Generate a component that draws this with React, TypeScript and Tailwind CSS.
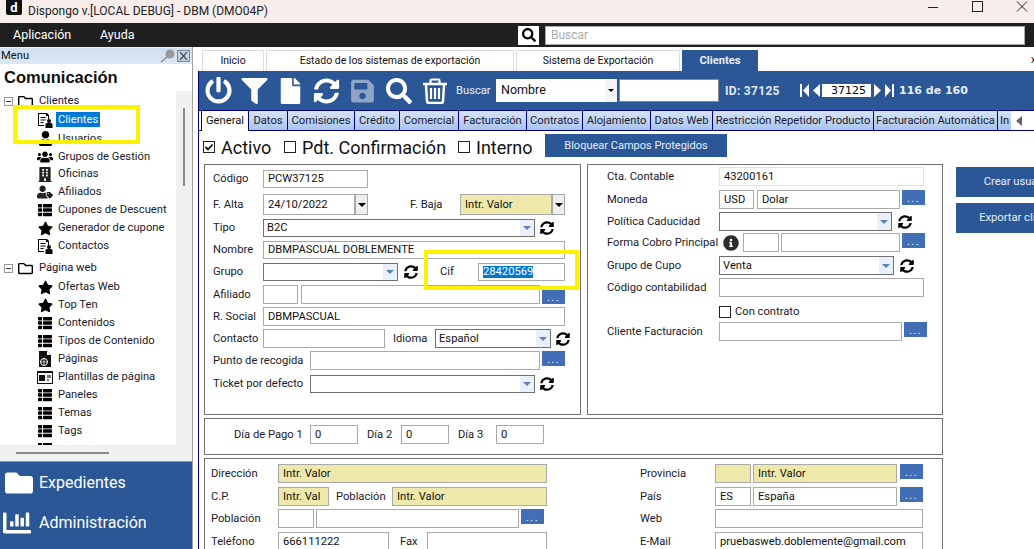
import type { ReactNode } from 'react'
import {
  FaBuilding, FaChartBar, FaFile, FaFilter, FaFolder, FaInfoCircle, FaPowerOff, FaRegFolder,
  FaSave, FaSearch, FaStar, FaSyncAlt, FaThList, FaUser, FaUsers, FaUserTag,
} from 'react-icons/fa'

function ContactIcon() {
  return (
    <svg width="16" height="16" viewBox="0 0 16 16" className="text-black">
      <path d="M1 1h9l2 2v4h-1V4H9V2H2v11h5v1H1z" fill="currentColor" />
      <path d="M3.5 5h5v1h-5zM3.5 7.5h5v1h-5zM3.5 10h3v1h-3z" fill="currentColor" />
      <circle cx="12" cy="9" r="2" fill="currentColor" />
      <path d="M8.5 16v-3.5q0-1.5 1.5-1.5h4q1.500 0 1.500 1.500V16z" fill="currentColor" />
    </svg>
  )
}

function PageIcon() {
  return (
    <svg width="16" height="16" viewBox="0 0 16 16">
      <path d="M2 0h8l4 4v12H2z" fill="#111" />
      <path d="M10 0v4h4z" fill="#fff" />
      <circle cx="7" cy="11" r="3.500" fill="none" stroke="#fff" strokeWidth="1" />
      <path d="M3.500 11h7M7 7.500v7" stroke="#fff" strokeWidth="0.7" />
    </svg>
  )
}

function TemplateIcon() {
  return (
    <svg width="16" height="13" viewBox="0 0 16 13">
      <rect x="0.500" y="0.500" width="15" height="12" fill="#fff" stroke="#111" />
      <rect x="0" y="0" width="16" height="2" fill="#111" />
      <rect x="2" y="4" width="6" height="6" fill="#111" />
      <rect x="10" y="4" width="4" height="3" fill="#777" />
      <rect x="10" y="8" width="2" height="2" fill="#777" />
    </svg>
  )
}

function TrashIcon() {
  return (
    <svg width="26" height="26" viewBox="0 0 26 26" className="ml-[10px] shrink-0">
      <path d="M1 6h24" stroke="#fff" strokeWidth="2.500" />
      <path d="M8.500 5.500V2.500q0-1 1-1h7q1 0 1 1v3" fill="none" stroke="#fff" strokeWidth="2.200" />
      <path d="M4 7l1 16q0 2 2 2h12q2 0 2-2l1-16" fill="none" stroke="#fff" strokeWidth="2.500" />
      <path d="M9 10v11M13 10v11M17 10v11" stroke="#fff" strokeWidth="2.200" />
    </svg>
  )
}

const list = <FaThList className="w-[16px] h-[14px] text-black" />
const star = <FaStar className="w-[15px] h-[15px] text-black" />

const firstGroup: { label: string; icon: ReactNode; h: string; selected?: boolean }[] = [
  { label: 'Clientes', icon: <ContactIcon />, h: 'h-[19px]', selected: true },
  { label: 'Usuarios', icon: <FaUser className="w-[15px] h-[15px] text-black" />, h: 'h-[19px]' },
  { label: 'Grupos de Gestión', icon: <FaUsers className="w-[16px] h-[16px] text-black" />, h: 'h-[17px]' },
  { label: 'Oficinas', icon: <FaBuilding className="w-[14px] h-[15px] text-[#222]" />, h: 'h-[18px]' },
  { label: 'Afiliados', icon: <FaUserTag className="w-[16px] h-[14px] text-[#222]" />, h: 'h-[18px]' },
  { label: 'Cupones de Descuent', icon: list, h: 'h-[18px]' },
  { label: 'Generador de cupone', icon: star, h: 'h-[18px]' },
  { label: 'Contactos', icon: <ContactIcon />, h: 'h-[18px]' },
]

const secondGroup: { label: string; icon: ReactNode }[] = [
  { label: 'Ofertas Web', icon: star },
  { label: 'Top Ten', icon: star },
  { label: 'Contenidos', icon: list },
  { label: 'Tipos de Contenido', icon: list },
  { label: 'Páginas', icon: <PageIcon /> },
  { label: 'Plantillas de página', icon: <TemplateIcon /> },
  { label: 'Paneles', icon: list },
  { label: 'Temas', icon: list },
  { label: 'Tags', icon: list },
  { label: '', icon: list },
]

const innerTabs = [
  ['Datos', 'w-[39px]'],
  ['Comisiones', 'w-[67px]'],
  ['Crédito', 'w-[45px]'],
  ['Comercial', 'w-[59px]'],
  ['Facturación', 'w-[68px]'],
  ['Contratos', 'w-[56px]'],
  ['Alojamiento', 'w-[68px]'],
  ['Datos Web', 'w-[62px]'],
  ['Restricción Repetidor Producto', 'w-[161px]'],
  ['Facturación Automática', 'w-[124px]'],
]

function TreeNode({ label, className }: { label: string; className: string }) {
  return (
    <div className={`flex items-center ${className}`}>
      <span className="ml-[4px] w-[9px] h-[9px] border border-[#999] flex items-center justify-center">
        <span className="w-[5px] h-px bg-[#333]" />
      </span>
      <FaRegFolder className="ml-[5px] w-[15px] h-[15px] text-black" />
      <span className="ml-[6px] text-[#1a1033]">{label}</span>
    </div>
  )
}

function TreeLeaf({ label, icon, className, selected }: { label: string; icon: ReactNode; className: string; selected?: boolean }) {
  return (
    <div className={`flex items-center pl-[37px] ${className}`}>
      <span className="w-[16px] flex justify-center">{icon}</span>
      <span className={selected ? 'ml-[3px] px-[2px] py-[2px] bg-[#0078d7] text-white' : 'ml-[5px] text-[#1a1a2a] whitespace-nowrap'}>{label}</span>
    </div>
  )
}

function Sidebar() {
  return (
    <aside className="w-[193px] shrink-0 border-r border-[#a0a0a0] flex flex-col bg-[#f0f0f0]">
      <div className="h-[16px] mt-px pl-[1px] flex items-center justify-between bg-gradient-to-b from-[#cfdff0] to-[#dce8f4]">
        <span>Menu</span>
        <span className="flex items-center gap-[1px] pr-[2px]">
          <svg width="16" height="14" viewBox="0 0 16 14">
            <circle cx="10" cy="5" r="4.500" fill="#9a9a9a" />
            <path d="M7 8L1 13" stroke="#8a8a8a" strokeWidth="1.500" />
          </svg>
          <span className="w-[13px] h-[12px] border border-[#7a8794] bg-[#c8d2dc] flex items-center justify-center">
            <svg width="9" height="8" viewBox="0 0 9 8">
              <path d="M1 0l7 8M8 0L1 8" stroke="#4a5560" strokeWidth="1.400" />
            </svg>
          </span>
        </span>
      </div>
      <div className="h-[27px] bg-white pl-[4px] flex items-center font-['Liberation_Sans',sans-serif] font-bold text-[16.500px] text-[#111]">Comunicación</div>
      <div className="flex flex-1 min-h-0">
        <div className="relative w-[176px] h-[354px] overflow-hidden bg-white pt-px">
          <TreeNode label="Clientes" className="h-[18px]" />
          {firstGroup.map(item => (
            <TreeLeaf key={item.label} label={item.label} icon={item.icon} className={item.h} selected={item.selected} />
          ))}
          <TreeNode label="Página web" className="h-[20px] mt-[3px]" />
          {secondGroup.map((item, i) => (
            <TreeLeaf key={i} label={item.label} icon={item.icon} className="h-[18px]" />
          ))}
          <div className="absolute left-[13px] top-[14px] w-[127px] h-[39px] border-[4px] border-[#fff200]" />
        </div>
        <div className="flex-1 flex justify-center pt-[17px]">
          <div className="w-[2px] h-[78px] bg-[#8a8a8a]" />
        </div>
      </div>
      <div className="h-[16px] flex items-center pl-[16px]">
        <div className="w-[93px] h-[2px] bg-[#8a8a8a]" />
      </div>
      <div className="h-[88px] bg-[#2b5797] border-t border-[#8a97a8] text-white text-[16px]">
        <div className="h-[41px] flex items-center pl-[4px] pt-[1px] gap-[5px]">
          <FaFolder className="w-[30px] h-[28px]" />
          <span>Expedientes</span>
        </div>
        <div className="h-[39px] flex items-center pl-[1px] gap-[6px]">
          <FaChartBar className="w-[32px] h-[28px]" />
          <span>Administración</span>
        </div>
      </div>
    </aside>
  )
}

function TopTab({ label, className }: { label: string; className: string }) {
  return (
    <div className={`h-[21px] border border-b-0 border-[#dcdcdc] flex items-center justify-center text-[10.500px] ${className}`}>{label}</div>
  )
}

function NavArrow({ dir, bar }: { dir: 'left' | 'right'; bar?: boolean }) {
  const points = dir === 'left' ? (bar ? '9,0 9,13 3,6.500' : '7,0 7,13 0,6.500') : bar ? '0,0 0,13 6,6.500' : '0,0 0,13 7,6.500'
  return (
    <svg width={bar ? 9 : 7} height="13" viewBox={`0 0 ${bar ? 9 : 7} 13`} className="shrink-0">
      <polygon points={points} fill="#fff" />
      {bar && <rect x={dir === 'left' ? 0 : 7} y="0" width="2" height="13" fill="#fff" />}
    </svg>
  )
}

function Toolbar() {
  return (
    <div className="h-[39px] bg-[#2b5797] flex items-center pl-[6px] text-white">
      <FaPowerOff className="w-[27px] h-[27px]" />
      <FaFilter className="ml-[9px] w-[27px] h-[26px]" />
      <FaFile className="ml-[10px] w-[25px] h-[26px]" />
      <FaSyncAlt className="ml-[10px] w-[27px] h-[26px]" />
      <FaSave className="ml-[9px] w-[27px] h-[26px] text-[#8fa5c6]" />
      <FaSearch className="ml-[10px] w-[26px] h-[26px]" />
      <TrashIcon />
      <span className="ml-[8px] w-[34px] text-[#e8eef8]">Buscar</span>
      <div className="ml-[6px] w-[121px] h-[23px] bg-white text-[#111] text-[12.500px] flex items-center pl-[5px] justify-between">
        <span>Nombre</span>
        <span className="w-[12px] h-full bg-[#f4f4f4] flex items-center justify-center">
          <span className="border-x-[3px] border-x-transparent border-t-[3px] border-t-black" />
        </span>
      </div>
      <div className="ml-[2px] w-[100px] h-[23px] bg-white border border-[#888]" />
      <span className="ml-[6px] w-[62px] font-bold text-[12px] text-[#dfe7f4] tracking-[0.3px]">ID: 37125</span>
      <span className="ml-[13px] flex items-center">
        <NavArrow dir="left" bar />
        <span className="w-[4px]" />
        <NavArrow dir="left" />
        <span className="ml-[2px] w-[49px] h-[13px] bg-white text-black flex items-center justify-end pr-[5px] font-['DejaVu_Sans',sans-serif] text-[11px]">37125</span>
        <span className="w-[3px]" />
        <NavArrow dir="right" />
        <span className="w-[4px]" />
        <NavArrow dir="right" bar />
      </span>
      <span className="ml-[5px] font-['DejaVu_Sans',sans-serif] font-bold text-[11px] text-[#e8eef8] whitespace-nowrap">116 de 160</span>
    </div>
  )
}

function TabStrip() {
  return (
    <div className="h-[21px] flex border-y border-[#000080]">
      <div className="w-[2px]" />
      <div className="w-[48px] -mt-px h-[21px] bg-white border-x border-t border-[#000080] flex items-center justify-center">General</div>
      {innerTabs.map(([label, width]) => (
        <div key={label} className={`${width} shrink-0 border-r border-[#000080] bg-gradient-to-b from-[#d6e3f6] to-[#a9c4ec] flex items-center justify-center text-[#1a1a33] whitespace-nowrap`}>
          {label}
        </div>
      ))}
      <div className="w-[13px] shrink-0 overflow-hidden bg-gradient-to-b from-[#d6e3f6] to-[#a9c4ec] pl-[2px] flex items-center">In</div>
      <div className="flex-1 flex items-center pl-[5px]">
        <span className="border-y-[5px] border-y-transparent border-r-[6px] border-r-[#666]" />
      </div>
    </div>
  )
}

function Check({ className = '', checked }: { className?: string; checked?: boolean }) {
  return (
    <span className={`w-[12px] h-[12px] border border-[#222] bg-white shrink-0 flex items-center justify-center ${className}`}>
      {checked && (
        <svg width="10" height="10" viewBox="0 0 10 10">
          <path d="M1.500 5l2.500 2.500 4.500-5" fill="none" stroke="#111" strokeWidth="1.800" />
        </svg>
      )}
    </span>
  )
}

function Field({ value, className = '', yellow }: { value?: string; className?: string; yellow?: boolean }) {
  return (
    <div className={`border border-[#a9a9a9] pl-[4px] flex items-center whitespace-nowrap overflow-hidden text-[#111] shrink-0 ${yellow ? 'bg-[#eee8aa]' : 'bg-white'} ${className}`}>
      {value}
    </div>
  )
}

function Combo({ value, className = '' }: { value?: string; className?: string }) {
  return (
    <div className={`border border-[#707070] bg-white flex items-center justify-between pl-[3px] text-[#111] shrink-0 ${className}`}>
      <span>{value}</span>
      <span className="w-[14px] h-full bg-[#e8f0fa] flex items-center justify-center">
        <span className="border-x-[4px] border-x-transparent border-t-[4px] border-t-[#5b80ba]" />
      </span>
    </div>
  )
}

function DateDrop({ className = '' }: { className?: string }) {
  return (
    <span className={`w-[13px] shrink-0 border border-[#a9a9a9] bg-[#eeeeee] flex items-center justify-center ${className}`}>
      <span className="border-x-[4px] border-x-transparent border-t-[4px] border-t-black" />
    </span>
  )
}

function Dots({ className = '' }: { className?: string }) {
  return (
    <div className={`w-[23px] h-[15px] shrink-0 bg-[#416eb4] text-white flex items-end justify-center text-[11px] leading-[13px] tracking-[1.500px] ${className}`}>...</div>
  )
}

function Sync({ className = '' }: { className?: string }) {
  return <FaSyncAlt className={`w-[14px] h-[14px] self-center text-black shrink-0 ${className}`} />
}

function Label({ children, className = '' }: { children: ReactNode; className?: string }) {
  return <span className={`flex items-center shrink-0 text-[#1a1a2a] whitespace-nowrap ${className}`}>{children}</span>
}

function ClientBox() {
  return (
    <div className="relative shrink-0 w-[377px] h-[251px] border border-[#707070] pl-[8px]">
      <div className="flex h-[18px] mt-[5px]">
        <Label className="w-[50px]">Código</Label>
        <Field value="PCW37125" className="w-[105px]" />
      </div>
      <div className="flex h-[21px] mt-[6px]">
        <Label className="w-[50px]">F. Alta</Label>
        <Field value="24/10/2022" className="w-[92px]" />
        <DateDrop />
        <Label className="ml-[42px] w-[50px]">F. Baja</Label>
        <Field value="Intr. Valor" yellow className="w-[92px]" />
        <DateDrop />
      </div>
      <div className="flex h-[18px] mt-[4px]">
        <Label className="w-[50px]">Tipo</Label>
        <Combo value="B2C" className="w-[272px]" />
        <Sync className="ml-[5px]" />
      </div>
      <div className="flex h-[18px] mt-[4px]">
        <Label className="w-[50px]">Nombre</Label>
        <Field value="DBMPASCUAL DOBLEMENTE" className="w-[302px]" />
      </div>
      <div className="flex h-[18px] mt-[4px]">
        <Label className="w-[50px]">Grupo</Label>
        <Combo className="w-[135px]" />
        <Sync className="ml-[6px]" />
        <Label className="ml-[22px] w-[38px]">Cif</Label>
        <div className="w-[87px] border border-[#a9a9a9] pl-[4px] flex items-center">
          <span className="bg-[#0078d7] text-white">28420569</span>
        </div>
      </div>
      <div className="flex h-[19px] mt-[4px]">
        <Label className="w-[50px]">Afiliado</Label>
        <Field className="w-[35px]" />
        <Field className="ml-[3px] w-[239px]" />
        <Dots className="ml-[2px] mt-[4px]" />
      </div>
      <div className="flex h-[19px] mt-[3px]">
        <Label className="w-[50px]">R. Social</Label>
        <Field value="DBMPASCUAL" className="w-[302px]" />
      </div>
      <div className="flex h-[19px] mt-[3px]">
        <Label className="w-[50px]">Contacto</Label>
        <Field className="w-[122px]" />
        <Label className="ml-[8px] w-[42px]">Idioma</Label>
        <Combo value="Español" className="w-[116px]" />
        <Sync className="ml-[5px]" />
      </div>
      <div className="flex h-[19px] mt-[3px]">
        <Label className="w-[97px]">Punto de recogida</Label>
        <Field className="w-[230px]" />
        <Dots className="ml-[2px]" />
      </div>
      <div className="flex h-[18px] mt-[5px]">
        <Label className="w-[97px]">Ticket por defecto</Label>
        <Combo className="w-[225px]" />
        <Sync className="ml-[5px]" />
      </div>
      <div className="absolute left-[219px] top-[85px] w-[155px] h-[40px] border-[4px] border-[#fff200]" />
    </div>
  )
}

function AccountBox() {
  return (
    <div className="shrink-0 w-[356px] h-[251px] border border-[#707070] pl-[19px]">
      <div className="flex h-[19px] mt-[2px]">
        <Label className="w-[112px]">Cta. Contable</Label>
        <Field value="43200161" className="w-[205px] border-[#e3e3e3]" />
      </div>
      <div className="flex h-[19px] mt-[4px]">
        <Label className="w-[112px]">Moneda</Label>
        <Field value="USD" className="w-[35px]" />
        <Field value="Dolar" className="ml-[3px] w-[143px]" />
        <Dots className="ml-[2px]" />
      </div>
      <div className="flex h-[19px] mt-[3px]">
        <Label className="w-[112px]">Política Caducidad</Label>
        <Combo className="w-[173px]" />
        <Sync className="ml-[6px]" />
      </div>
      <div className="flex h-[19px] mt-[2px]">
        <Label className="w-[116px]">Forma Cobro Principal</Label>
        <span className="w-[20px] flex items-center pl-[0px]">
          <FaInfoCircle className="w-[16px] h-[16px] text-[#2c2c2c] shrink-0" />
        </span>
        <Field className="w-[36px]" />
        <Field className="ml-[2px] w-[119px]" />
        <Dots className="ml-[2px]" />
      </div>
      <div className="flex h-[19px] mt-[4px]">
        <Label className="w-[112px]">Grupo de Cupo</Label>
        <Combo value="Venta" className="w-[175px]" />
        <Sync className="ml-[6px]" />
      </div>
      <div className="flex h-[19px] mt-[3px]">
        <Label className="w-[112px]">Código contabilidad</Label>
        <Field className="w-[205px]" />
      </div>
      <div className="flex h-[12px] mt-[9px] ml-[112px]">
        <Check />
        <Label className="ml-[4px]">Con contrato</Label>
      </div>
      <div className="flex h-[19px] mt-[4px]">
        <Label className="w-[112px]">Cliente Facturación</Label>
        <Field className="w-[183px]" />
        <Dots className="ml-[2px]" />
      </div>
    </div>
  )
}

function DayBox() {
  return (
    <div className="ml-[5px] mt-[3px] w-[739px] h-[37px] border border-[#707070] pl-[29px] pt-[6px]">
      <div className="flex h-[19px]">
        <Label className="w-[76px]">Día de Pago 1</Label>
        <Field value="0" className="w-[48px]" />
        <Label className="ml-[9px] w-[34px]">Día 2</Label>
        <Field value="0" className="w-[48px]" />
        <Label className="ml-[9px] w-[38px]">Día 3</Label>
        <Field value="0" className="w-[48px]" />
      </div>
    </div>
  )
}

function AddressBox() {
  return (
    <div className="ml-[5px] mt-[3px] w-[739px] h-[100px] border border-[#707070] border-b-0 pl-[6px] flex">
      <div className="w-[429px]">
        <div className="flex h-[19px] mt-[5px]">
          <Label className="w-[67px]">Dirección</Label>
          <Field value="Intr. Valor" yellow className="w-[269px]" />
        </div>
        <div className="flex h-[19px] mt-[4px]">
          <Label className="w-[67px]">C.P.</Label>
          <Field value="Intr. Val" yellow className="w-[51px]" />
          <Label className="ml-[7px] w-[56px]">Población</Label>
          <Field value="Intr. Valor" yellow className="w-[155px]" />
        </div>
        <div className="flex h-[19px] mt-[3px]">
          <Label className="w-[67px]">Población</Label>
          <Field className="w-[36px]" />
          <Field className="ml-[2px] w-[203px]" />
          <Dots className="ml-[2px]" />
        </div>
        <div className="flex h-[19px] mt-[4px]">
          <Label className="w-[67px]">Teléfono</Label>
          <Field value="666111222" className="w-[111px]" />
          <Label className="ml-[11px] w-[27px]">Fax</Label>
          <Field className="w-[120px]" />
        </div>
      </div>
      <div className="flex-1">
        <div className="flex h-[19px] mt-[5px]">
          <Label className="w-[75px]">Provincia</Label>
          <Field yellow className="w-[36px]" />
          <Field value="Intr. Valor" yellow className="ml-[2px] w-[144px]" />
          <Dots className="ml-[3px]" />
        </div>
        <div className="flex h-[19px] mt-[4px]">
          <Label className="w-[75px]">País</Label>
          <Field value="ES" className="w-[36px]" />
          <Field value="España" className="ml-[2px] w-[144px]" />
          <Dots className="ml-[3px]" />
        </div>
        <div className="flex h-[19px] mt-[3px]">
          <Label className="w-[75px]">Web</Label>
          <Field className="w-[208px]" />
        </div>
        <div className="flex h-[19px] mt-[4px]">
          <Label className="w-[75px]">E-Mail</Label>
          <Field value="pruebasweb.doblemente@gmail.com" className="w-[208px]" />
        </div>
      </div>
    </div>
  )
}

export default function App() {
  return (
    <div className="w-[1034px] h-[549px] overflow-hidden flex flex-col bg-white font-['Roboto',sans-serif] text-[11.200px] leading-none text-[#111]">
      <header className="h-[23px] shrink-0 bg-[#f7eeec] flex items-center">
        <span className="ml-[6px] -mt-[8px] w-[16px] h-[15px] bg-[#111] rounded-b-[2px] flex items-center justify-center text-white font-bold text-[13px]">d</span>
        <span className="ml-[6px] -mt-[1px] flex-1 text-[12px] text-[#222]">Dispongo v.[LOCAL DEBUG] - DBM (DMO04P)</span>
        <svg width="100" height="14" viewBox="0 0 100 14" className="-mt-[9px] mr-[6px] text-[#222]">
          <path d="M0 7.500h10" stroke="currentColor" />
          <rect x="44.500" y="1.500" width="10" height="10" fill="none" stroke="currentColor" />
          <path d="M89 1.500l10 10M99 1.500l-10 10" stroke="currentColor" />
        </svg>
      </header>
      <nav className="h-[24px] shrink-0 bg-[#1f1f1f] flex items-center text-white text-[12.500px]">
        <span className="ml-[13px] w-[87px]">Aplicación</span>
        <span className="w-[34px]">Ayuda</span>
        <span className="ml-[384px] w-[21px] h-[19px] bg-white flex items-center justify-center">
          <FaSearch className="w-[14px] h-[14px] text-black" />
        </span>
        <div className="ml-[6px] w-[480px] h-[19px] bg-white border border-[#aaa] pl-[5px] flex items-center text-[12px] text-[#aaa]">Buscar</div>
      </nav>
      <div className="flex flex-1 min-h-0">
        <Sidebar />
        <main className="flex-1 min-w-0 pl-[5px]">
          <div className="flex h-[24px] pt-[3px] pl-[3px] gap-[2px] border-l border-white">
            <TopTab label="Inicio" className="w-[62px]" />
            <TopTab label="Estado de los sistemas de exportación" className="w-[248px]" />
            <TopTab label="Sistema de Exportación" className="w-[164px]" />
            <div className="w-[76px] h-[21px] bg-[#2b5797] text-[#e8eef8] font-bold flex items-center justify-center">Clientes</div>
            <span className="ml-auto -mr-[2px] pt-[5px] text-[10px]">x</span>
          </div>
          <div className="border-l border-[#000080] h-[478px]">
            <Toolbar />
            <TabStrip />
            <div className="h-[33px] flex items-start pt-[3px] text-[18px] text-[#111]">
              <Check checked className="ml-[4px] mt-[7px]" />
              <span className="ml-[6px] mt-[5px] w-[63px]">Activo</span>
              <Check className="mt-[7px]" />
              <span className="ml-[6px] mt-[5px] w-[156px] whitespace-nowrap">Pdt. Confirmación</span>
              <Check className="mt-[7px]" />
              <span className="ml-[6px] mt-[5px] w-[69px]">Interno</span>
              <div className="w-[182px] h-[23px] bg-[#2b5797] text-[#e8eef8] text-[11px] flex items-center justify-center">Bloquear Campos Protegidos</div>
            </div>
            <div className="flex pl-[5px]">
              <ClientBox />
              <div className="ml-[6px] shrink-0">
                <AccountBox />
              </div>
              <div className="ml-[13px] pt-[3px] flex flex-col gap-[6px] shrink-0">
                <div className="w-[122px] h-[30px] bg-[#2b5797] text-[#e8eef8] flex items-center justify-center whitespace-nowrap">Crear usuario</div>
                <div className="w-[130px] h-[30px] bg-[#2b5797] text-[#e8eef8] flex items-center justify-center whitespace-nowrap">Exportar clientes</div>
              </div>
            </div>
            <DayBox />
            <AddressBox />
          </div>
        </main>
      </div>
    </div>
  )
}
